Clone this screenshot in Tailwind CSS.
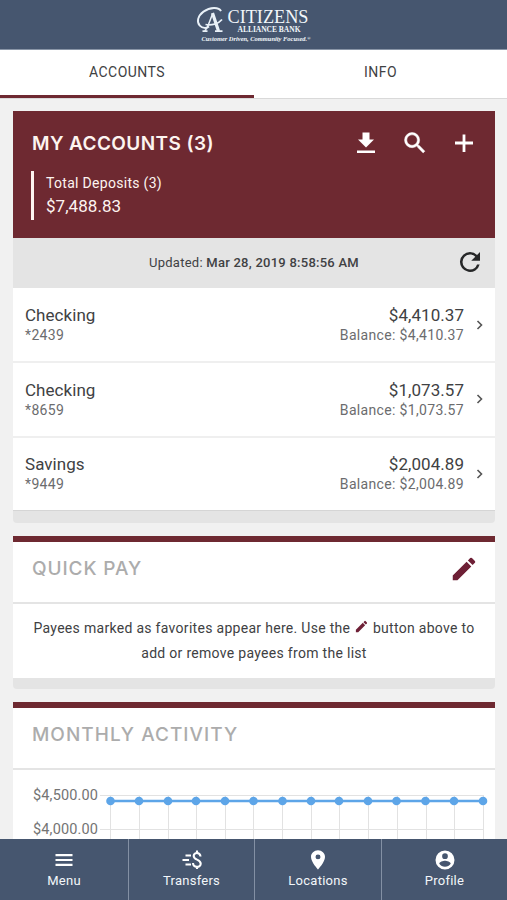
<!DOCTYPE html>
<html lang="en">
<head>
<meta charset="utf-8">
<meta name="viewport" content="width=device-width, initial-scale=1">
<title>Citizens Alliance Bank</title>
<script src="https://cdn.jsdelivr.net/npm/@tailwindcss/browser@4"></script>
</head>
<body class="bg-[#f1f1f1]">
<div class="flex h-[900px] w-[507px] flex-col overflow-hidden font-['Roboto',sans-serif] text-[#404143]">
  <header class="flex h-[50px] shrink-0 justify-center border-b border-[#8995a7] bg-[#46566f]">
    <svg class="h-[49px] w-[130px]" viewBox="188.500 0 130 49" fill="#f2f7fb" role="img" aria-label="Citizens Alliance Bank">
      <g fill="none" stroke="#e9f1f8">
        <path stroke-width="1.900" d="M220.500 11.200C218.500 6.800 209.500 7 203 11.600C197 16 196 22 199.300 25.600C202 28.500 206 28.600 208.500 26.500"/>
        <path stroke-width="1.500" d="M204 31C206.500 30 208.500 23 212 14"/>
        <path stroke-width="3.200" d="M212 13L218 31"/>
        <path stroke-width="1.700" d="M205 24.500C211 25.500 218 24 221.500 19.500M214.500 31.200H222M202 31.200H207"/>
      </g>
      <text x="227" y="22.500" font-family="Liberation Serif, serif" font-size="18.500" textLength="81" lengthAdjust="spacingAndGlyphs">CITIZENS</text>
      <text x="237" y="31.500" font-family="Liberation Serif, serif" font-size="8.800" font-weight="bold" textLength="63" lengthAdjust="spacingAndGlyphs">ALLIANCE BANK</text>
      <text x="201" y="41" font-family="Liberation Serif, serif" font-size="6.600" font-weight="bold" font-style="italic" textLength="109" lengthAdjust="spacingAndGlyphs">Customer Driven, Community Focused.<tspan dy="-1.500" font-size="4.500">®</tspan></text>
    </svg>
  </header>
  <nav class="flex h-[49px] shrink-0 border-b border-[#d9d9d9] bg-white text-[14px] leading-[20px]">
    <div class="w-[254px] border-b-[3px] border-[#6e2931] pt-3 text-center tracking-[0.45px]">ACCOUNTS</div>
    <div class="flex-1 pt-3 text-center tracking-[0.45px]">INFO</div>
  </nav>

  <main class="flex min-h-0 flex-1 flex-col gap-[13px] overflow-hidden pt-3 pr-3 pl-[13px]">
    <section class="h-[412px] shrink-0 overflow-hidden rounded-b-[4px] bg-[#e4e4e4]">
      <div class="h-[127px] bg-[#6e2931] pt-[17px] pr-[17px] pl-[19px] text-[#fdf4f0]">
        <div class="flex h-[30px] items-center justify-between">
          <h1 class="pt-[2px] font-['Inter',sans-serif] text-[19px] font-semibold tracking-[0.4px] whitespace-nowrap">MY ACCOUNTS (3)</h1>
          <div class="flex items-center gap-[21px]">
            <svg class="h-7 w-7" viewBox="0 0 28 28" fill="#fff"><path d="M10.500 3.500h7v7h4.500L14 18.500 6 10.500h4.500zM5 21.500h18v2.500H5z"/></svg>
            <svg class="h-7 w-7" viewBox="0 0 24 24" fill="#fff" stroke="#fff" stroke-width=".4"><path d="M15.500 14h-.79l-.28-.27A6.471 6.471 0 0 0 16 9.500 6.500 6.500 0 1 0 9.500 16c1.610 0 3.090-.59 4.230-1.570l.27.28v.79l5 4.990L20.490 19l-4.990-5zm-6 0C7.010 14 5 11.990 5 9.500S7.010 5 9.500 5 14 7.010 14 9.500 11.990 14 9.500 14z"/></svg>
            <svg class="h-7 w-7" viewBox="0 0 28 28" fill="#fff"><path d="M12.600 5.500h2.800v7.100H23v2.800h-7.600V23h-2.800v-7.600H5v-2.800h7.600z"/></svg>
          </div>
        </div>
        <div class="mt-[13px] -ml-px h-[49px] border-l-[3px] border-[#fdf4f0] pl-3">
          <div class="text-[14px] leading-[24px] tracking-[0.3px]">Total Deposits (3)</div>
          <div class="text-[16.500px] text-[17px] leading-[23px] tracking-[0.05px]">$7,488.83</div>
        </div>
      </div>
      <div class="relative flex h-[50px] items-center justify-center bg-[#e4e4e4] text-[13px] tracking-[0.25px]">
        <span>Updated: <b class="font-medium">Mar 28, 2019 8:58:56 AM</b></span>
        <svg class="absolute top-[9px] right-[10px] h-[30px] w-[30px]" viewBox="0 0 24 24" fill="#262728"><path d="M17.650 6.350A7.958 7.958 0 0 0 12 4a8 8 0 1 0 7.730 10h-2.080A5.990 5.990 0 0 1 12 18a6 6 0 1 1 0-12c1.660 0 3.140.69 4.220 1.780L13 11h7V4z"/></svg>
      </div>
      <div class="flex flex-col gap-[2px] border-b border-[#d5d5d5] bg-[#efefef]">
        <div class="flex h-[73px] items-center bg-white pr-[10px] pl-3">
          <div class="flex-1"><div class="text-[17px] leading-[22px] tracking-[0.05px]">Checking</div><div class="text-[14px] leading-[19px] tracking-[0.35px] text-[#6b6c6e]">*2439</div></div>
          <div class="text-right"><div class="text-[17px] leading-[22px] tracking-[0.05px]">$4,410.37</div><div class="text-[14px] leading-[19px] tracking-[0.33px] text-[#6b6c6e]">Balance: $4,410.37</div></div>
          <svg class="ml-[11px] h-[10px] w-[10px]" viewBox="0 0 10 10" fill="none" stroke="#555" stroke-width="1.600"><path d="M2.500 1L6.500 5L2.500 9"/></svg>
        </div>
        <div class="flex h-[73px] items-center bg-white pr-[10px] pb-px pl-3">
          <div class="flex-1"><div class="text-[17px] leading-[22px] tracking-[0.05px]">Checking</div><div class="text-[14px] leading-[19px] tracking-[0.35px] text-[#6b6c6e]">*8659</div></div>
          <div class="text-right"><div class="text-[17px] leading-[22px] tracking-[0.05px]">$1,073.57</div><div class="text-[14px] leading-[19px] tracking-[0.33px] text-[#6b6c6e]">Balance: $1,073.57</div></div>
          <svg class="ml-[11px] h-[10px] w-[10px]" viewBox="0 0 10 10" fill="none" stroke="#555" stroke-width="1.600"><path d="M2.500 1L6.500 5L2.500 9"/></svg>
        </div>
        <div class="flex h-[72px] items-center bg-white pr-[10px] pb-px pl-3">
          <div class="flex-1"><div class="text-[17px] leading-[22px] tracking-[0.05px]">Savings</div><div class="text-[14px] leading-[19px] tracking-[0.35px] text-[#6b6c6e]">*9449</div></div>
          <div class="text-right"><div class="text-[17px] leading-[22px] tracking-[0.05px]">$2,004.89</div><div class="text-[14px] leading-[19px] tracking-[0.33px] text-[#6b6c6e]">Balance: $2,004.89</div></div>
          <svg class="ml-[11px] h-[10px] w-[10px]" viewBox="0 0 10 10" fill="none" stroke="#555" stroke-width="1.600"><path d="M2.500 1L6.500 5L2.500 9"/></svg>
        </div>
      </div>
    </section>

    <section class="h-[153px] shrink-0 overflow-hidden rounded-b-[4px] border-t-[6px] border-[#6e2931] bg-[#e4e4e4]">
      <div class="flex h-[62px] items-center justify-between border-b-2 border-[#e4e4e4] bg-white pr-[16px] pb-[7px] pl-[19px]">
        <h2 class="pt-[2px] font-['Inter',sans-serif] text-[19px] font-medium tracking-[0.9px] text-[#acacac]">QUICK PAY</h2>
        <svg class="h-[30px] w-[30px]" viewBox="0 0 24 24" fill="#6e2036"><path d="M3 17.250V21h3.750L17.810 9.940l-3.750-3.750zM20.710 7.040a1 1 0 0 0 0-1.410l-2.340-2.340a1 1 0 0 0-1.410 0l-1.830 1.830 3.750 3.750z"/></svg>
      </div>
      <div class="h-[74px] bg-white pt-[12px] text-center text-[14px] leading-[25px] tracking-[0.3px]">
        <div>Payees marked as favorites appear here. Use the <svg class="mb-[5px] inline h-[15px] w-[15px]" viewBox="0 0 24 24" fill="#6e2036"><path d="M3 17.250V21h3.750L17.810 9.940l-3.750-3.750zM20.710 7.040a1 1 0 0 0 0-1.410l-2.340-2.340a1 1 0 0 0-1.410 0l-1.830 1.830 3.750 3.750z"/></svg> button above to</div>
        <div>add or remove payees from the list</div>
      </div>
    </section>

    <section class="h-[150px] shrink-0 border-t-[6px] border-[#6e2931] bg-white">
      <div class="flex h-[62px] items-center border-b-2 border-[#e4e4e4] pb-[6px] pl-[19px]">
        <h2 class="font-['Inter',sans-serif] text-[19px] font-medium tracking-[1.030px] text-[#acacac]">MONTHLY ACTIVITY</h2>
      </div>
      <svg class="block h-[70px] w-[482px]" viewBox="13 770 482 70">
        <path fill="none" stroke="#e2e2e2" d="M100 795.500H484M100 829.500H484M110.500 795V840M139.500 795V840M168.500 795V840M196.500 795V840M225.500 795V840M253.500 795V840M282.500 795V840M311.500 795V840M339.500 795V840M368.500 795V840M397.500 795V840M426.500 795V840M454.500 795V840M483.500 795V840"/>
        <path stroke="#5da5e8" stroke-width="2.500" d="M110 801H483"/>
        <g fill="#5da5e8"><circle cx="110.500" cy="801" r="4.300"/><circle cx="139" cy="801" r="4.300"/><circle cx="168" cy="801" r="4.300"/><circle cx="196" cy="801" r="4.300"/><circle cx="225" cy="801" r="4.300"/><circle cx="253.500" cy="801" r="4.300"/><circle cx="282.500" cy="801" r="4.300"/><circle cx="311" cy="801" r="4.300"/><circle cx="339" cy="801" r="4.300"/><circle cx="368" cy="801" r="4.300"/><circle cx="396.500" cy="801" r="4.300"/><circle cx="425.500" cy="801" r="4.300"/><circle cx="454" cy="801" r="4.300"/><circle cx="483" cy="801" r="4.300"/></g>
        <g fill="#747474" font-size="14.500" text-anchor="end"><text x="98" y="800" textLength="65">$4,500.00</text><text x="98" y="834" textLength="65">$4,000.00</text></g>
      </svg>
    </section>
  </main>

  <footer class="flex h-[61px] shrink-0 divide-x divide-[#8390a4] bg-[#46566f] text-[13px] leading-[18px] tracking-[0.25px] text-[#f3f6fa]">
    <div class="flex w-[129px] flex-col items-center pt-[9px]">
      <svg class="h-6 w-6" viewBox="0 0 24 24" fill="#fff"><path d="M3.500 6h17v2.200h-17zM3.500 10.900h17v2.200h-17zM3.500 15.700h17v2.200h-17z"/></svg>
      <span>Menu</span>
    </div>
    <div class="flex w-[126px] flex-col items-center pt-[9px]">
      <svg class="h-6 w-6" viewBox="0 0 24 24" fill="none" stroke="#fff" stroke-width="2.100"><path d="M5.500 7.500H11M2.500 12H9M5.500 16.500H11M20.500 8.500C20 3.800 13.700 4 13.700 8C13.700 12.500 20.700 10.700 20.700 15.700C20.700 20 13.200 20 13 15M17 2.500V5.500M17 18V21"/></svg>
      <span>Transfers</span>
    </div>
    <div class="flex w-[127px] flex-col items-center pt-[9px]">
      <svg class="h-6 w-6" viewBox="0 0 24 24" fill="#fff"><path d="M12 2C8.130 2 5 5.130 5 9c0 5.250 7 13 7 13s7-7.750 7-13c0-3.870-3.130-7-7-7zm0 9.500a2.500 2.500 0 1 1 0-5 2.500 2.500 0 0 1 0 5z" transform="translate(0 .3) scale(1 .96)"/></svg>
      <span>Locations</span>
    </div>
    <div class="flex flex-1 flex-col items-center pt-[9px]">
      <svg class="h-6 w-6" viewBox="0 0 24 24" fill="#fff"><path d="M12 2a10 10 0 1 0 0 20 10 10 0 0 0 0-20zm0 3a3 3 0 1 1 0 6 3 3 0 0 1 0-6zm0 14.200a7.200 7.200 0 0 1-6-3.220c.03-1.990 4-3.080 6-3.080 1.990 0 5.970 1.090 6 3.080a7.200 7.200 0 0 1-6 3.220z" transform="translate(.6 .6) scale(.95)"/></svg>
      <span>Profile</span>
    </div>
  </footer>
</div>
</body>
</html>
